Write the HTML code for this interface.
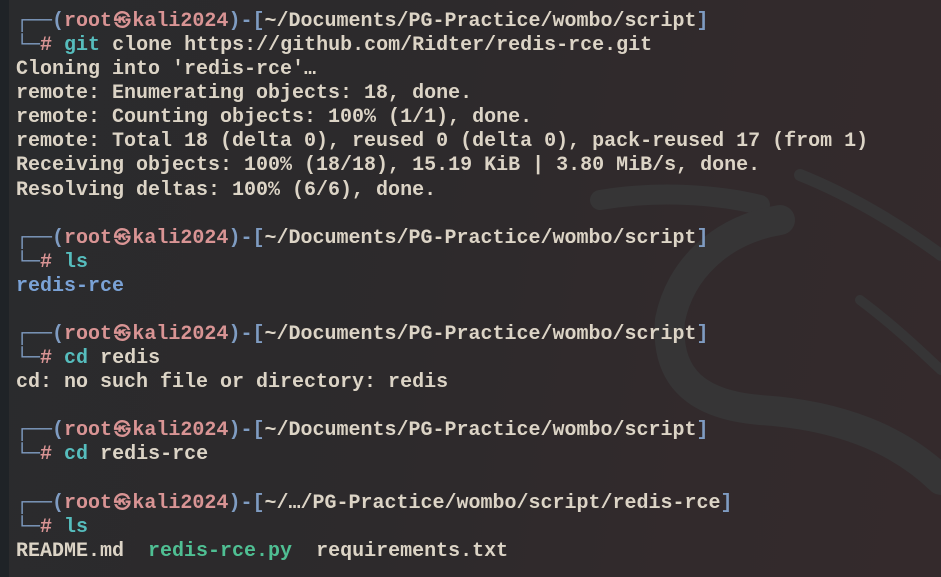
<!DOCTYPE html>
<html><head><meta charset="utf-8"><style>
html,body{margin:0;padding:0;width:941px;height:577px;overflow:hidden;background:#2b2a2c}
.bg{position:absolute;inset:0;background:linear-gradient(100deg,#2a2b2d 0%,#2d2a2c 45%,#322a2c 75%,#342a2c 100%)}
.strip{position:absolute;left:0;top:0;width:9px;height:577px;background:#1f2327}
svg{position:absolute;left:0;top:0}
pre{position:absolute;left:16px;top:10px;margin:0;font-family:"Liberation Mono","DejaVu Sans Mono",monospace;font-size:20px;line-height:24px;color:#dcd4c6;font-weight:bold;letter-spacing:0}
.l{display:block;height:24.08px;white-space:pre}
.b{color:#7f9cc2}.p{color:#d99494}.c{color:#56bdbd}.d{color:#7aa2d6}.g{color:#4fbf93}
.k{display:inline-block;width:1.2em;text-align:center;font-size:17px;line-height:10px;font-family:"DejaVu Sans",sans-serif}
</style></head><body>
<div class="bg"></div>
<svg width="941" height="577" viewBox="0 0 941 577">
<g fill="none" stroke="#363536" stroke-linecap="round">
<path d="M600 200 C660 190 720 195 760 205" stroke-width="20"/>
<path d="M780 220 C720 230 680 270 670 320 C665 380 700 405 760 410 C840 415 900 440 941 480" stroke-width="30"/>
<path d="M800 175 C850 195 900 225 941 255" stroke-width="12"/>
<path d="M860 300 C900 330 930 360 941 370" stroke-width="10"/>
</g>
</svg>
<div class="strip"></div>
<pre><span class="l"><span class="b">┌──(</span><span class="p">root<span class="k">㉿</span>kali2024</span><span class="b">)-[</span>~/Documents/PG-Practice/wombo/script<span class="b">]</span></span><span class="l"><span class="b">└─</span><span class="p">#</span> <span class="c">git</span> clone https://github.com/Ridter/redis-rce.git</span><span class="l">Cloning into 'redis-rce'…</span><span class="l">remote: Enumerating objects: 18, done.</span><span class="l">remote: Counting objects: 100% (1/1), done.</span><span class="l">remote: Total 18 (delta 0), reused 0 (delta 0), pack-reused 17 (from 1)</span><span class="l">Receiving objects: 100% (18/18), 15.19 KiB | 3.80 MiB/s, done.</span><span class="l">Resolving deltas: 100% (6/6), done.</span><span class="l"> </span><span class="l"><span class="b">┌──(</span><span class="p">root<span class="k">㉿</span>kali2024</span><span class="b">)-[</span>~/Documents/PG-Practice/wombo/script<span class="b">]</span></span><span class="l"><span class="b">└─</span><span class="p">#</span> <span class="c">ls</span></span><span class="l"><span class="d">redis-rce</span></span><span class="l"> </span><span class="l"><span class="b">┌──(</span><span class="p">root<span class="k">㉿</span>kali2024</span><span class="b">)-[</span>~/Documents/PG-Practice/wombo/script<span class="b">]</span></span><span class="l"><span class="b">└─</span><span class="p">#</span> <span class="c">cd</span> redis</span><span class="l">cd: no such file or directory: redis</span><span class="l"> </span><span class="l"><span class="b">┌──(</span><span class="p">root<span class="k">㉿</span>kali2024</span><span class="b">)-[</span>~/Documents/PG-Practice/wombo/script<span class="b">]</span></span><span class="l"><span class="b">└─</span><span class="p">#</span> <span class="c">cd</span> redis-rce</span><span class="l"> </span><span class="l"><span class="b">┌──(</span><span class="p">root<span class="k">㉿</span>kali2024</span><span class="b">)-[</span>~/…/PG-Practice/wombo/script/redis-rce<span class="b">]</span></span><span class="l"><span class="b">└─</span><span class="p">#</span> <span class="c">ls</span></span><span class="l">README.md  <span class="g">redis-rce.py</span>  requirements.txt</span></pre>
</body></html>
